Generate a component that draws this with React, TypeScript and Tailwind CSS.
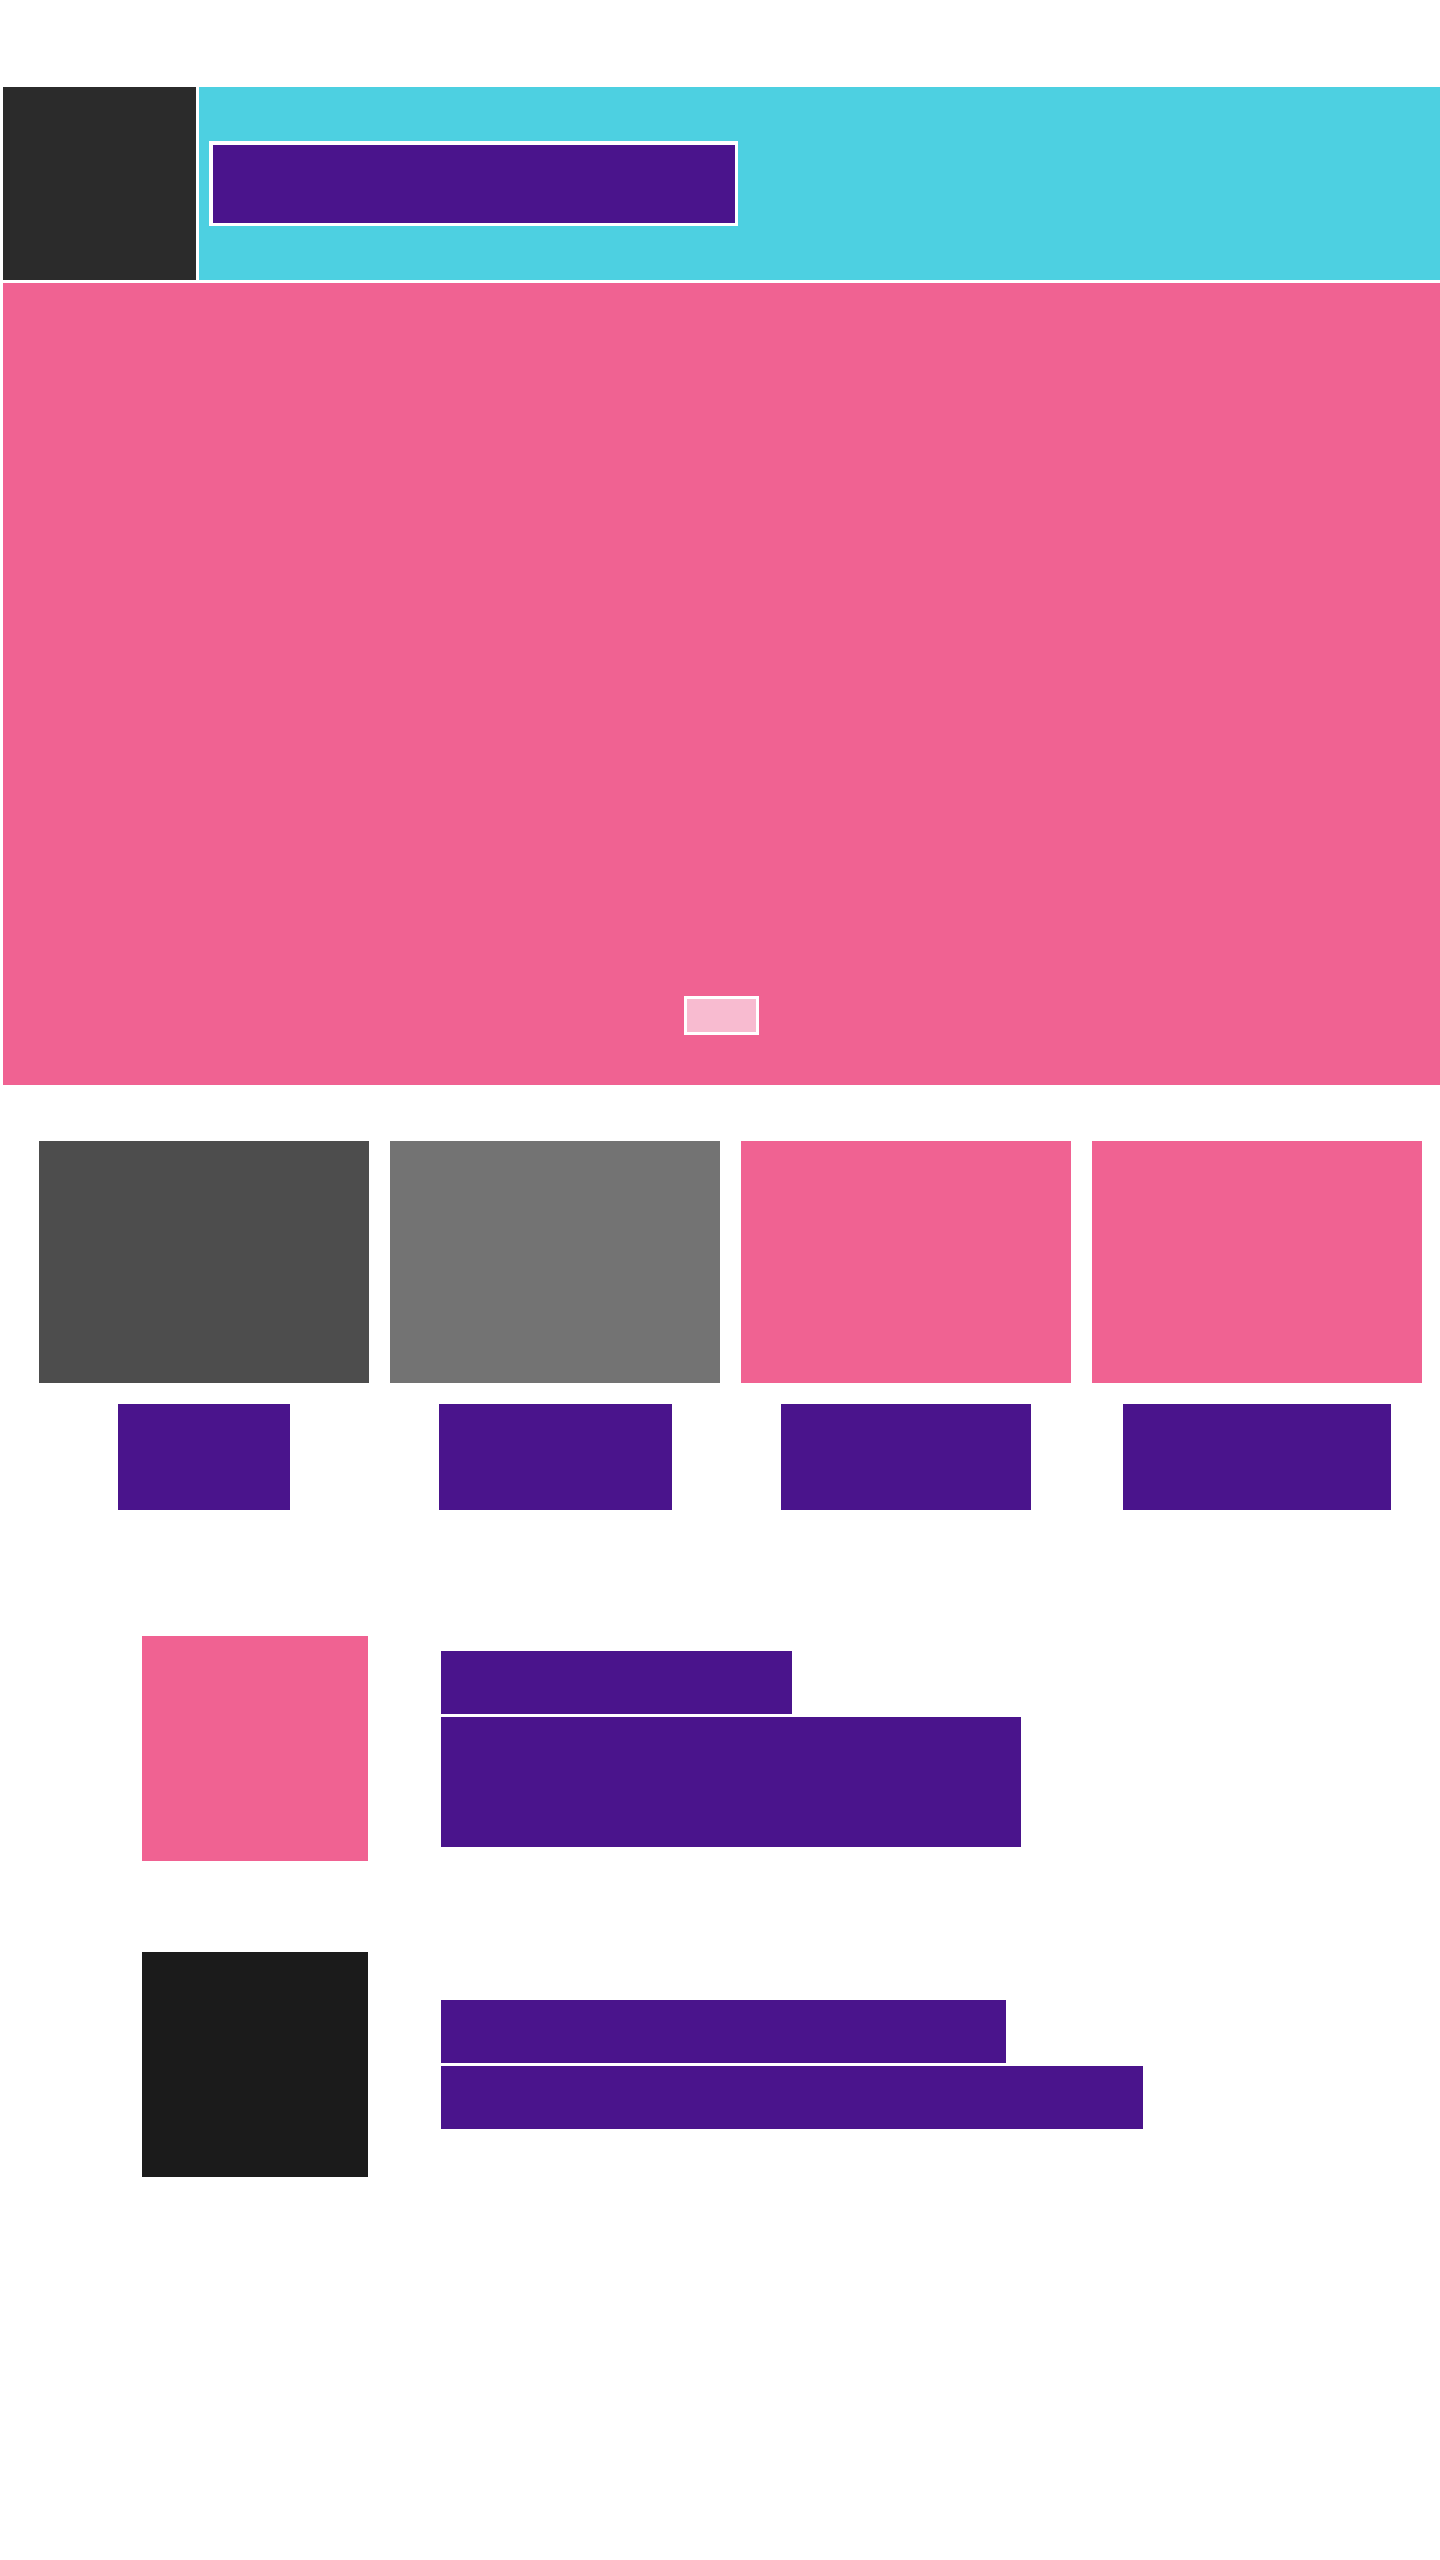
const cards = [
  { bg: "bg-[#4d4d4d]", label: "w-[172px]" },
  { bg: "bg-[#737373]", label: "w-[233px]" },
  { bg: "bg-[#f06292]", label: "w-[250px]" },
  { bg: "bg-[#f06292]", label: "w-[268px]" },
];

const rows = [
  {
    thumb: "bg-[#f06292]",
    title: "w-[351px] h-[63px]",
    body: "w-[580px] h-[130px]",
  },
  {
    thumb: "bg-[#1b1b1b]",
    title: "w-[565px] h-[63px]",
    body: "w-[702px] h-[63px]",
  },
];

// page blocks only, no text in the mock
const App = () => {
  return (
    <div className="min-h-[2560px] bg-white pl-[3px] pt-[87px] font-['Liberation_Sans',sans-serif]">
      {/* header */}
      <header className="flex h-[193px] gap-[3px]">
        <div className="w-[193px] bg-[#2b2b2b]" />
        <div className="flex flex-1 items-center bg-[#4dd0e1] pl-[10px]">
          <div className="h-[85px] w-[529px] border-t-4 border-l-4 border-r-[3px] border-b-[3px] border-white bg-[#4a148c]" />
        </div>
      </header>

      {/* hero */}
      <section className="mt-[3px] flex h-[802px] items-end justify-center bg-[#f06292] pb-[50px]">
        <div className="h-[39px] w-[75px] border-[3px] border-white bg-[#f8bbd0]" />
      </section>

      {/* cards */}
      <section className="mt-[56px] flex gap-[21px] pl-[36px]">
        {cards.map((c, i) => (
          <div key={i} className="flex w-[330px] flex-col items-center gap-[21px]">
            <div className={`h-[242px] w-full ${c.bg}`} />
            <div className={`h-[106px] bg-[#4a148c] ${c.label}`} />
          </div>
        ))}
      </section>

      {/* list rows */}
      <section className="mt-[126px] flex flex-col gap-[91px] pl-[139px]">
        {rows.map((r, i) => (
          <div key={i} className="flex items-center gap-[73px]">
            <div className={`h-[225px] w-[226px] shrink-0 ${r.thumb}`} />
            <div className="flex flex-col gap-[3px]">
              <div className={`bg-[#4a148c] ${r.title}`} />
              <div className={`bg-[#4a148c] ${r.body}`} />
            </div>
          </div>
        ))}
      </section>
    </div>
  );
};

export default App;
